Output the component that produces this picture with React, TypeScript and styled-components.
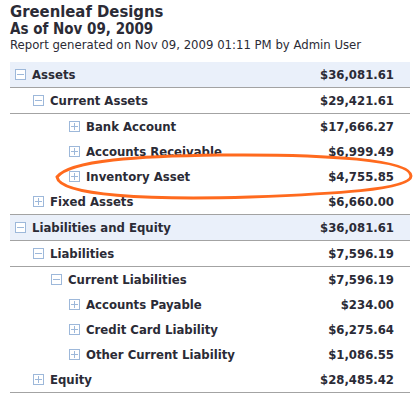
import React from "react";
import styled, { createGlobalStyle } from "styled-components";

const Global = createGlobalStyle`
  body {
    margin: 0;
    background: #fff;
    font-family: "DejaVu Sans Condensed", "DejaVu Sans", sans-serif;
    color: #2b2b36;
  }
`;

const Page = styled.div`
  position: relative;
  width: 418px;
  height: 402px;
  padding: 2px 8px 0 10px;
  box-sizing: border-box;
`;

const Title = styled.div`
  font-size: 16.5px;
  font-weight: bold;
  line-height: 19px;
`;

const SubTitle = styled.div`
  font-size: 15px;
  font-weight: bold;
  line-height: 16px;
`;

const Note = styled.div`
  font-size: 13px;
  line-height: 15px;
  margin-bottom: 10px;
`;

const Table = styled.div`
  width: 400px;
  display: flex;
  flex-direction: column;
`;

const Row = styled.div<{ $level: number; $top?: boolean; $line?: boolean }>`
  display: flex;
  align-items: center;
  height: 25px;
  padding: 0 16px 0 ${(p) => 5 + p.$level * 18}px;
  background: ${(p) => (p.$top ? "#eaf0fa" : "transparent")};
  border-bottom: ${(p) => (p.$line ? "1px solid #a3a3a3" : "none")};
  font-size: 13px;
  font-weight: bold;
`;

const Name = styled.span`
  flex: 1;
  margin-left: 6px;
`;

const Amount = styled.span`
  text-align: right;
`;

const Box = styled.svg`
  width: 11px;
  height: 11px;
  flex: none;
`;

const Toggle = ({ open }: { open: boolean }) => (
  <Box viewBox="0 0 11 11">
    <rect x="0.5" y="0.5" width="10" height="10" fill="#fff" stroke="#9db8da" />
    <line x1="2" y1="5.5" x2="9" y2="5.5" stroke="#9db8da" />
    {!open && <line x1="5.5" y1="2" x2="5.5" y2="9" stroke="#9db8da" />}
  </Box>
);

const Circle = styled.svg`
  position: absolute;
  left: 0;
  top: 0;
  pointer-events: none;
`;

type Item = {
  name: string;
  amount: string;
  level: number;
  open?: boolean;
  top?: boolean;
  line?: boolean;
};

const rows: Item[] = [
  { name: "Assets", amount: "$36,081.61", level: 0, open: true, top: true, line: true },
  { name: "Current Assets", amount: "$29,421.61", level: 1, open: true, line: true },
  { name: "Bank Account", amount: "$17,666.27", level: 3 },
  { name: "Accounts Receivable", amount: "$6,999.49", level: 3 },
  { name: "Inventory Asset", amount: "$4,755.85", level: 3 },
  { name: "Fixed Assets", amount: "$6,660.00", level: 1, line: true },
  { name: "Liabilities and Equity", amount: "$36,081.61", level: 0, open: true, top: true, line: true },
  { name: "Liabilities", amount: "$7,596.19", level: 1, open: true, line: true },
  { name: "Current Liabilities", amount: "$7,596.19", level: 2, open: true },
  { name: "Accounts Payable", amount: "$234.00", level: 3 },
  { name: "Credit Card Liability", amount: "$6,275.64", level: 3 },
  { name: "Other Current Liability", amount: "$1,086.55", level: 3 },
  { name: "Equity", amount: "$28,485.42", level: 1, line: true },
];

export default function App() {
  return (
    <>
      <Global />
      <Page>
        <Title>Greenleaf Designs</Title>
        <SubTitle>As of Nov 09, 2009</SubTitle>
        <Note>Report generated on Nov 09, 2009 01:11 PM by Admin User</Note>
        <Table>
          {rows.map((r) => (
            <Row key={r.name} $level={r.level} $top={r.top} $line={r.line}>
              <Toggle open={!!r.open} />
              <Name>{r.name}</Name>
              <Amount>{r.amount}</Amount>
            </Row>
          ))}
        </Table>
        <Circle width="418" height="402" viewBox="0 0 418 402">
          <path
            d="M57 177 C70 160 140 156 220 155 C330 154 411 160 411 176 C411 190 330 194 250 197 C150 200 60 196 57 177 Z"
            fill="none"
            stroke="#ff6a1e"
            strokeWidth="3"
          />
        </Circle>
      </Page>
    </>
  );
}
